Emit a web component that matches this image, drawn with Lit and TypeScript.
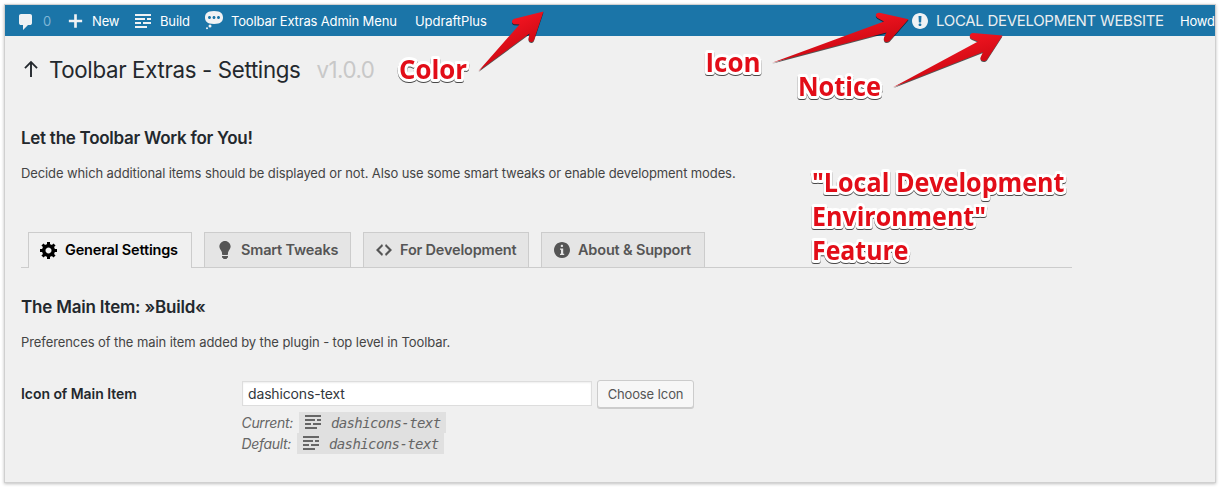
import { LitElement, html, css, svg } from "lit";
import { customElement, property } from "lit/decorators.js";

const ICONS: Record<string, string> = {
  comments: "M5 2h9q.82 0 1.41.59T16 4v7q0 .82-.59 1.41T14 13h-2l-5 5v-5H5q-.82 0-1.41-.59T3 11V4q0-.82.59-1.41T5 2z",
  plus: "M17 8.6v2.8h-5.6V17H8.6v-5.6H3V8.6h5.600V3h2.800v5.600z",
  text: "M18 3v2H2V3h16zm-6 4v2H2V7h10zm6 0v2h-4V7h4zM8 11v2H2v-2h6zm10 0v2h-8v-2h8zm-4 4v2H2v-2h12z",
  status: "M10 1c7 0 9 2.91 9 6.5S17 14 10 14s-9-2.91-9-6.500S3 1 10 1zM5.500 9C6.330 9 7 8.330 7 7.500S6.330 6 5.500 6 4 6.670 4 7.500 4.670 9 5.500 9zM10 9c.83 0 1.500-.67 1.500-1.500S10.830 6 10 6s-1.500.67-1.500 1.500S9.170 9 10 9zM14.500 9c.83 0 1.500-.67 1.500-1.500S15.330 6 14.500 6 13 6.670 13 7.500 13.670 9 14.500 9zM6 14.500a1.500 1.500 0 1 1 0 3 1.500 1.500 0 0 1 0-3zM3 17.200a1 1 0 1 1 0 2 1 1 0 0 1 0-2z",
  warning: "M10 2c4.420 0 8 3.580 8 8s-3.580 8-8 8-8-3.580-8-8 3.580-8 8-8zm1.130 9.380l.35-6.460H8.520l.35 6.460h2.260zm-.09 3.360c.24-.23.37-.55.37-.96 0-.42-.12-.74-.36-.97s-.59-.35-1.060-.35-.82.12-1.070.35-.37.55-.37.97c0 .41.13.73.38.96.26.23.61.34 1.060.34s.8-.11 1.050-.34z",
  generic: "M18 12h-2.180c-.17.7-.44 1.350-.81 1.930l1.540 1.540-2.100 2.100-1.540-1.540c-.58.36-1.230.63-1.910.79V19H8v-2.180c-.68-.16-1.330-.43-1.910-.79l-1.540 1.540-2.120-2.120 1.540-1.540c-.36-.58-.63-1.230-.79-1.910H1V9.030h2.170c.16-.7.44-1.350.8-1.940L2.430 5.550l2.100-2.100 1.540 1.540c.58-.37 1.240-.64 1.930-.81V2h3v2.180c.68.16 1.330.43 1.910.79l1.540-1.540 2.120 2.120-1.540 1.540c.36.59.64 1.240.8 1.940H18V12zm-8.500 1.500c1.660 0 3-1.340 3-3s-1.340-3-3-3-3 1.340-3 3 1.340 3 3 3z",
  bulb: "M10 1c3.110 0 5.630 2.520 5.630 5.620 0 1.840-2.030 4.580-2.030 4.580-.33.44-.6 1.250-.6 1.800v1c0 .55-.45 1-1 1H8c-.55 0-1-.45-1-1v-1c0-.55-.27-1.360-.6-1.800 0 0-2.020-2.740-2.020-4.580C4.380 3.520 6.890 1 10 1zM7 16.870V16h6v.87c0 .62-.13 1.130-.75 1.130H12c0 .62-.4 1-1.020 1h-2c-.61 0-.98-.38-.98-1h-.25c-.62 0-.75-.51-.75-1.130z",
  code: "M9 6l-4 4 4 4-1 2-6-6 6-6zm2 8l4-4-4-4 1-2 6 6-6 6z",
  info: "M10 2c4.420 0 8 3.580 8 8s-3.580 8-8 8-8-3.580-8-8 3.580-8 8-8zm1.100 3.900c0-.72-.5-1.200-1.200-1.200s-1.200.48-1.200 1.200.5 1.200 1.200 1.200 1.200-.48 1.200-1.200zM12.200 15v-1.200H11.200V8.500H8v1.200h1v4.100H8V15z",
  up: "M9.050 18V5.300L4.600 9.700 3.300 8.400 10 1.800l6.700 6.600-1.300 1.300-4.450-4.400V18z",
};

@customElement("dash-icon")
class DashIcon extends LitElement {
  @property() name = "";
  static styles = css`
    :host { display: block; flex: none; width: 20px; height: 20px; }
    svg { display: block; width: 100%; height: 100%; fill: currentColor; }
  `;
  render() {
    return html`<svg viewBox="0 0 20 20"><path fill-rule="evenodd" d=${ICONS[this.name]}></path></svg>`;
  }
}

const TABS = [
  { key: "general", icon: "generic", label: "General Settings" },
  { key: "tweaks", icon: "bulb", label: "Smart Tweaks" },
  { key: "dev", icon: "code", label: "For Development" },
  { key: "about", icon: "info", label: "About & Support" },
];

const NOTES = [
  { x: 399, y: 79, w: 68, text: "Color" },
  { x: 705.5, y: 72, w: 55, text: "Icon" },
  { x: 798, y: 96, w: 83, text: "Notice" },
  { x: 812, y: 192, w: 252.5, text: '"Local Development' },
  { x: 812, y: 226, w: 174, text: 'Environment"' },
  { x: 812, y: 260, w: 96.5, text: "Feature" },
];

const ARROWS = [
  "M478.500 71 L519.500 24.500 L514 24.200 C511 23.500 511.500 19.500 514.500 18.800 L543.500 11.500 L534 40 C532.500 43.500 528.500 42 528.500 39 L529.500 33.500 Z",
  "M772 62.800 L884 21.500 L877.500 18 C874.500 15.500 876 12.500 879.500 12.800 L908.500 19.200 L889.500 41 C886.500 43.500 883 41.500 884 37.500 L886.500 32.500 Z",
  "M893 87.300 L978 41.500 L972 39 C968.500 37.500 969.500 33 973 33 L1002.500 35.500 L987 59.500 C984.500 62.500 980 61 980.500 57.500 L983 52 Z",
];

@customElement("app-root")
class AppRoot extends LitElement {
  static styles = css`
    :host {
      display: block; position: relative; box-sizing: border-box;
      width: 1220px; height: 487px; padding: 5px; overflow: hidden;
      background: #fff; color: #23282d;
      font: 13px/20px Inter, "Liberation Sans", sans-serif;
    }
    .panel {
      height: 477px; box-sizing: border-box; overflow: hidden; background: #f0f0f0;
    }
    .frame { box-shadow: 0 0 0 1px #d0d0d0, 0 1px 3px 1px rgba(0, 0, 0, 0.25); }
    .bar {
      display: flex; align-items: center; height: 31px; background: #1b75a8;
      color: #fff; white-space: nowrap;
    }
    .item { display: flex; align-items: center; gap: 7px; height: 31px; }
    .item dash-icon { color: #f0f2f4; }
    .i-comments { margin-left: 11px; width: 50px; box-sizing: border-box; }
    .i-comments dash-icon { margin-top: 2px; }
    .count { color: #7fb6d6; letter-spacing: -0.5px; }
    .i-new { width: 67px; }
    .i-new dash-icon { width: 19px; }
    .i-build { width: 71px; }
    .i-menu { width: 211px; }
    .i-menu dash-icon { margin-top: -1px; }
    .t-new { letter-spacing: -0.15px; }
    .t-menu { letter-spacing: -0.16px; }
    .t-up { letter-spacing: -0.06px; }
    .local { margin-left: auto; gap: 6px; width: 270px; font-size: 15px; color: #eceef0; }
    .t-local { letter-spacing: -0.3px; }
    .howdy { width: 35px; letter-spacing: -0.25px; }
    .body { padding: 22px 143px 0 16px; }
    .title { display: flex; align-items: center; height: 24px; margin: 0; font-weight: 400; font-size: 22.3px; line-height: 24px; }
    .title dash-icon { width: 20px; height: 20px; margin: -3px 8px 0 0; }
    .t-title { letter-spacing: -0.34px; }
    .version { color: #c8c8c8; margin-left: 16px; letter-spacing: -0.5px; }
    h2 { margin: 46px 0 0; font-size: 17px; line-height: 20px; font-weight: 600; letter-spacing: -0.27px; }
    p { margin: 15px 0 0; color: #444; letter-spacing: -0.106px; }
    .p2 { letter-spacing: -0.08px; }
    .tabs { display: flex; gap: 12px; height: 35px; margin-top: 49px; padding-left: 7px; border-bottom: 1px solid #ccc; }
    .tab {
      display: flex; align-items: center; gap: 6px; box-sizing: border-box; height: 35px;
      padding: 0 0 0 10px; border: 1px solid #ccc; border-bottom: 0; background: #e5e5e5;
      color: #555; font-weight: 600; font-size: 14.5px; letter-spacing: -0.18px; white-space: nowrap;
    }
    .general { width: 164px; height: 36px; padding-bottom: 1px; background: #f0f0f0; color: #000; }
    .tweaks { width: 147px; }
    .dev { width: 166px; }
    .about { width: 164px; }
    .second { margin-top: 29px; letter-spacing: -0.2px; }
    .field { display: grid; grid-template-columns: 221px 1fr; margin-top: 28px; }
    .name { font-weight: 600; font-size: 14px; line-height: 28px; letter-spacing: -0.05px; }
    .row { display: flex; align-items: flex-start; }
    .input {
      box-sizing: border-box; width: 350px; height: 25px; margin-top: 1px; border: 1px solid #ddd;
      background: #fff; box-shadow: inset 0 1px 2px rgba(0, 0, 0, 0.07);
      padding-left: 5px; font-size: 14px; line-height: 24px; color: #32373c; letter-spacing: -0.15px;
    }
    .button {
      box-sizing: border-box; width: 97px; height: 28px; margin-left: 5px; border: 1px solid #ccc;
      border-radius: 3px; background: #f7f7f7; box-shadow: 0 1px 0 #ccc; color: #555;
      text-align: center; line-height: 27px; letter-spacing: -0.14px;
    }
    .hint { display: flex; align-items: center; height: 21px; color: #666; font-style: italic; font-size: 14px; }
    .first { margin-top: 4px; }
    .k { letter-spacing: -0.33px; margin: 0 6px 0 -0.5px; }
    .code {
      display: flex; align-items: center; gap: 8px; height: 21px; width: 147px; box-sizing: border-box;
      padding-left: 4px; background: #e0e0e0; font-family: "DejaVu Sans Mono", monospace; font-size: 14px;
      letter-spacing: -0.6px;
    }
    .code dash-icon { margin-top: -1px; }
    .overlay { position: absolute; left: 0; top: 0; width: 1220px; height: 487px; pointer-events: none; }
    .arrows { fill: url(#red); filter: drop-shadow(0 1px 0.6px rgba(0, 0, 0, 0.65)); }
    .notes {
      font: 700 27px "Open Sans", "Noto Sans", sans-serif; fill: #e20d18; stroke: #fff; stroke-width: 6px;
      stroke-linejoin: round; paint-order: stroke; filter: drop-shadow(0 1px 0.7px rgba(0, 0, 0, 0.7));
    }
  `;

  private hint(cls: string, label: string) {
    return html`<div class="hint ${cls}">
      <span class="k">${label}</span>
      <span class="code"><dash-icon name="text"></dash-icon><span>dashicons-text</span></span>
    </div>`;
  }

  render() {
    return html`
      <div class="panel frame">
        <div class="bar">
          <div class="item i-comments"><dash-icon name="comments"></dash-icon><span class="count">0</span></div>
          <div class="item i-new"><dash-icon name="plus"></dash-icon><span class="t-new">New</span></div>
          <div class="item i-build"><dash-icon name="text"></dash-icon><span class="t-new">Build</span></div>
          <div class="item i-menu"><dash-icon name="status"></dash-icon><span class="t-menu">Toolbar Extras Admin Menu</span></div>
          <div class="item"><span class="t-up">UpdraftPlus</span></div>
          <div class="item local"><dash-icon name="warning"></dash-icon><span class="t-local">LOCAL DEVELOPMENT WEBSITE</span></div>
          <div class="howdy">Howd</div>
        </div>
        <div class="body">
          <h1 class="title"><dash-icon name="up"></dash-icon><span class="t-title">Toolbar Extras - Settings</span><span class="version">v1.0.0</span></h1>
          <h2>Let the Toolbar Work for You!</h2>
          <p class="p1">Decide which additional items should be displayed or not. Also use some smart tweaks or enable development modes.</p>
          <div class="tabs">
            ${TABS.map((t) => html`<div class="tab ${t.key}"><dash-icon name=${t.icon}></dash-icon><span>${t.label}</span></div>`)}
          </div>
          <h2 class="second">The Main Item: »Build«</h2>
          <p class="p2">Preferences of the main item added by the plugin - top level in Toolbar.</p>
          <div class="field">
            <div class="name">Icon of Main Item</div>
            <div>
              <div class="row"><div class="input">dashicons-text</div><div class="button">Choose Icon</div></div>
              ${this.hint("first", "Current:")} ${this.hint("", "Default:")}
            </div>
          </div>
        </div>
      </div>
      <svg class="overlay" viewBox="0 0 1220 487">
        <defs>
          <linearGradient id="red" x1="0" y1="0" x2="0.6" y2="1">
            <stop offset="0.35" stop-color="#f01420"></stop>
            <stop offset="0.75" stop-color="#d00a14"></stop>
          </linearGradient>
        </defs>
        <g class="arrows">${ARROWS.map((d) => svg`<path d=${d}></path>`)}</g>
        <g class="notes">
          ${NOTES.map((n) => svg`<text x=${n.x} y=${n.y} textLength=${n.w} lengthAdjust="spacingAndGlyphs">${n.text}</text>`)}
        </g>
      </svg>
    `;
  }
}
